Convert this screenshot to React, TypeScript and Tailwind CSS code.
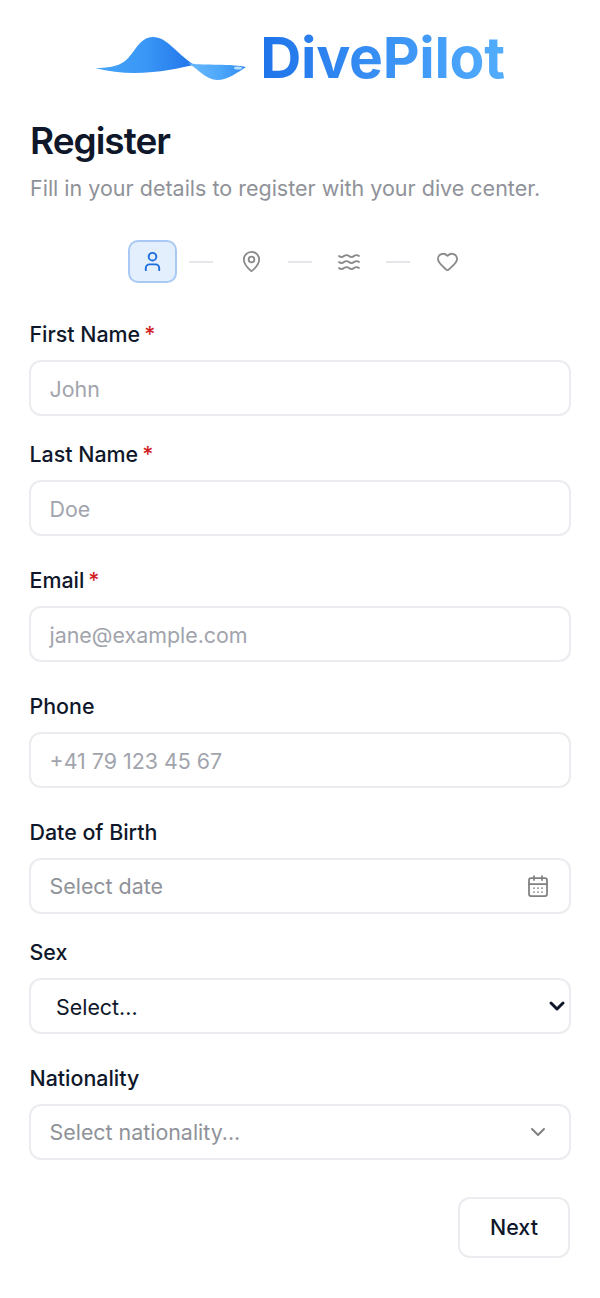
import { CalendarDays, ChevronDown, Heart, MapPin, User, Waves } from "lucide-react";

const inputBox =
  "mt-[12px] flex h-[56px] w-full items-center rounded-[12px] border-2 border-[#ebecef] bg-white text-[21.4px]";

function Label({ text, required }: { text: string; required?: boolean }) {
  return (
    <div className="flex h-[26px] items-center pb-[2px] pl-[0.5px] text-[21.4px] font-medium text-[#0f172a]">
      {text}
      {required && <span className="ml-[4px] text-[#d02020]">*</span>}
    </div>
  );
}

function TextField({ label, placeholder, required, className }: { label: string; placeholder: string; required?: boolean; className: string }) {
  return (
    <div className={className}>
      <Label text={label} required={required} />
      <div className={`${inputBox} pl-[18.5px] pt-[3px] text-[#a1a4ad]`}>{placeholder}</div>
    </div>
  );
}

function Logo() {
  return (
    <div className="flex items-center justify-center">
      <svg width="152" height="44" viewBox="0 0 152 44" className="mr-[13px] mt-[2px]">
        <defs>
          <linearGradient id="hump" x1="0" y1="0" x2="1" y2="0">
            <stop offset="0" stopColor="#45a5fa" />
            <stop offset="0.5" stopColor="#3a97f6" />
            <stop offset="1" stopColor="#2275ea" />
          </linearGradient>
          <linearGradient id="fin" x1="0" y1="0" x2="1" y2="0">
            <stop offset="0" stopColor="#6abafc" />
            <stop offset="0.6" stopColor="#4aa5f9" />
            <stop offset="1" stopColor="#2d89f0" />
          </linearGradient>
        </defs>
        <path
          d="M0 31 C12 31 22 30 30 24 C40 16 44 0 58 0 C72 0 80 15 99 28 C80 32 40 42 0 31 Z"
          fill="url(#hump)"
        />
        <path
          d="M93 26 C106 29 130 26 151 30 C143 35 133 43 122 43 C112 43 104 33 93 26 Z"
          fill="url(#fin)"
        />
        <ellipse cx="143" cy="31" rx="4" ry="1.5" fill="#b9e0fd" />
      </svg>
      <span className="bg-gradient-to-r from-[#1f73ea] to-[#53adfc] bg-clip-text text-[57px] leading-[60px] font-[650] tracking-[-0.3px] text-transparent">
        DivePilot
      </span>
    </div>
  );
}

function Stepper() {
  const divider = <div className="mx-[12px] h-[2px] w-[24px] bg-[#e5e7eb]" />;
  return (
    <div className="mt-[37px] flex items-center justify-center">
      <div className="flex h-[43px] w-[49px] items-center justify-center rounded-[10px] border-2 border-[#a9c9f5] bg-[#e4effd] text-[#1d6fe0]">
        <User size={23} strokeWidth={2} />
      </div>
      <div className="mr-px">{divider}</div>
      <div className="flex w-[50px] justify-center text-[#8a8a8a]">
        <MapPin size={23} strokeWidth={1.9} />
      </div>
      {divider}
      <div className="flex w-[50px] justify-center text-[#8a8a8a]">
        <Waves size={24} strokeWidth={1.75} />
      </div>
      {divider}
      <div className="flex w-[50px] justify-center text-[#8a8a8a]">
        <Heart size={23} strokeWidth={1.9} />
      </div>
    </div>
  );
}

export default function App() {
  return (
    <div className="h-[1298px] w-[600px] bg-white px-[29px] pt-[28px] font-['Inter',sans-serif] text-[#0f172a]">
      <Logo />

      <h1 className="mt-[31px] pl-px text-[37px] leading-[44px] font-semibold tracking-[-1px] text-[#0f172a]">
        Register
      </h1>
      <p className="mt-[10px] pl-px text-[21.5px] leading-[30px] text-[#8f9299]">
        Fill in your details to register with your dive center.
      </p>

      <Stepper />

      <TextField className="mt-[39px]" label="First Name" placeholder="John" required />
      <TextField className="mt-[26px]" label="Last Name" placeholder="Doe" required />
      <TextField className="mt-[32px]" label="Email" placeholder="jane@example.com" required />
      <TextField className="mt-[32px]" label="Phone" placeholder="+41 79 123 45 67" />

      <div className="mt-[32px]">
        <Label text="Date of Birth" />
        <div className={`${inputBox} justify-between pl-[18.5px] pr-[19px] text-[#8f9299]`}>
          <span className="pt-px">Select date</span>
          <CalendarDays size={24} strokeWidth={1.75} className="text-[#808080]" />
        </div>
      </div>
      <div className="mt-[26px]">
        <Label text="Sex" />
        <div className={`${inputBox} justify-between pl-[25px] text-[#0f172a]`}>
          <span className="pt-[3px]">Select...</span>
          <ChevronDown size={24} strokeWidth={3} className="text-[#0f172a]" />
        </div>
      </div>
      <div className="mt-[32px]">
        <Label text="Nationality" />
        <div className={`${inputBox} justify-between pl-[18.5px] pr-[19px] text-[#8f9299]`}>
          <span className="pt-px">Select nationality...</span>
          <ChevronDown size={24} strokeWidth={2} className="text-[#808080]" />
        </div>
      </div>

      <div className="mt-[37px] flex justify-end">
        <button className="mr-px h-[61px] w-[112px] rounded-[12px] border-2 border-[#ebecef] bg-white text-[21.4px] font-medium text-[#0f172a]">
          Next
        </button>
      </div>
    </div>
  );
}
